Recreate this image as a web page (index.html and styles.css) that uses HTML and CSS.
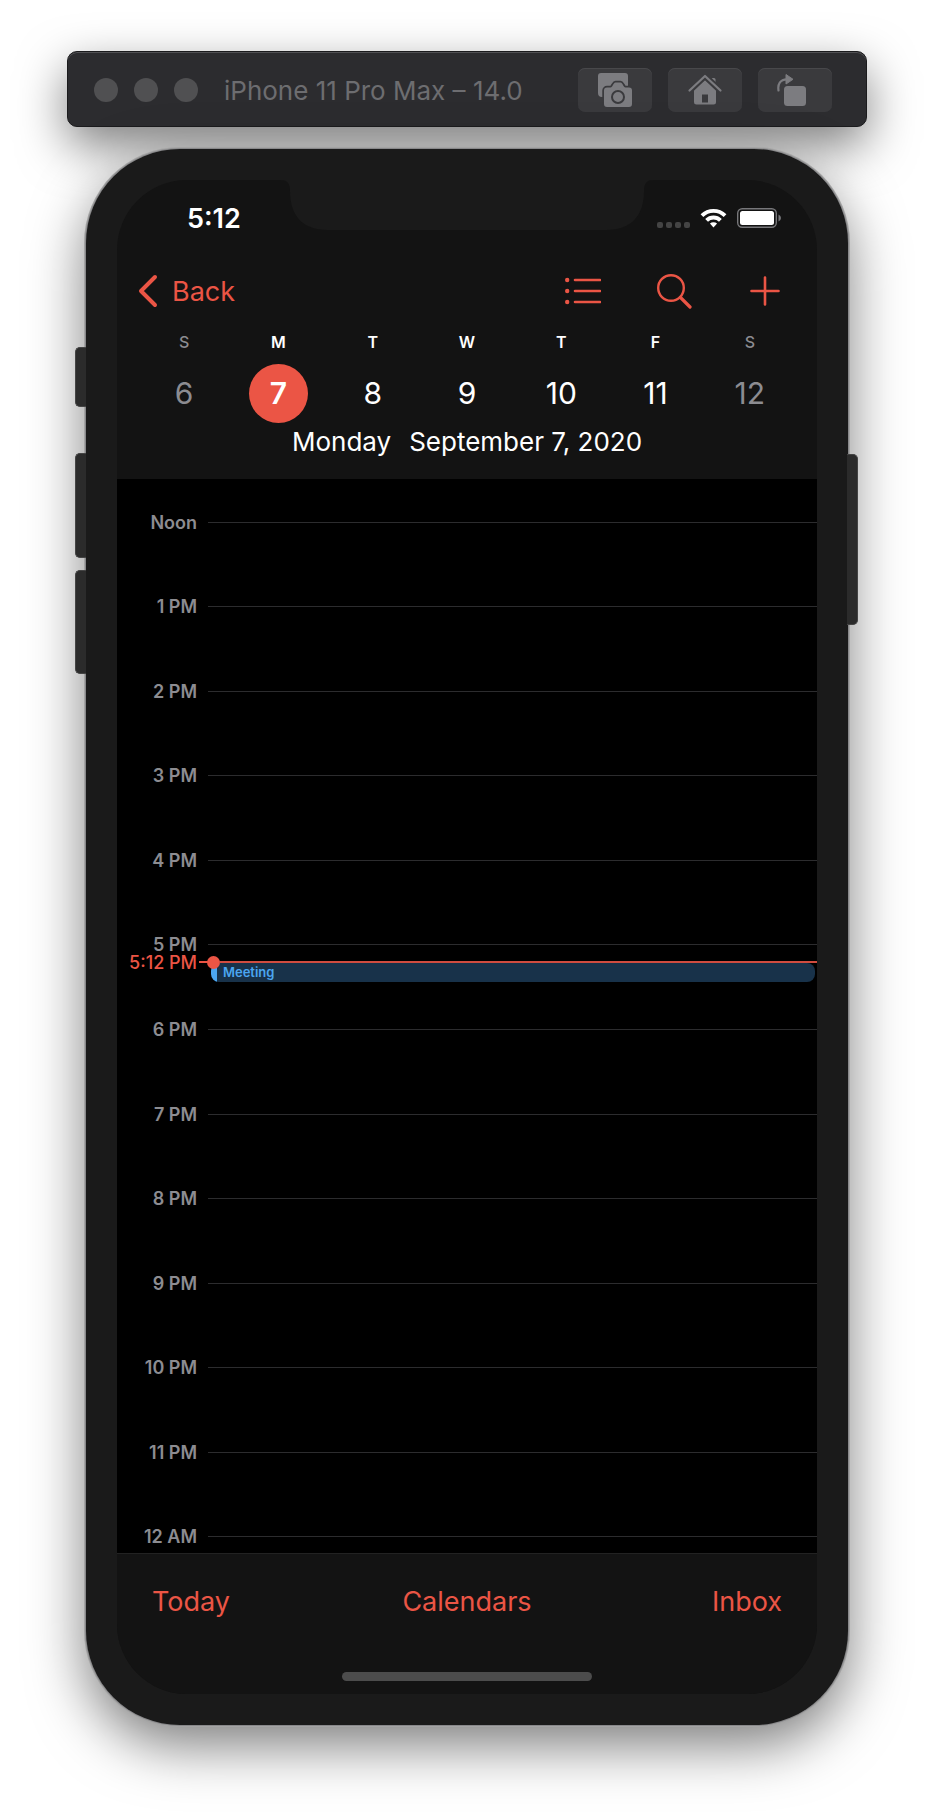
FILE: index.html
```html
<!DOCTYPE html>
<html lang="en">
<head>
<meta charset="utf-8">
<meta name="viewport" content="width=device-width, initial-scale=1">
<title>Calendar – Simulator</title>
<link rel="stylesheet" href="styles.css">
</head>
<body>
<header class="toolbar">
  <div class="lights"><span class="light"></span><span class="light"></span><span class="light"></span></div>
  <h1 class="toolbar-title">iPhone 11 Pro Max – 14.0</h1>
  <div class="tools">
    <button class="tool" aria-label="Screenshot">
      <svg width="36" height="36" viewBox="0 0 36 36"><path d="M4 1h24a3 3 0 0 1 3 3v14H12v7H5a4 4 0 0 1-4-4V4a3 3 0 0 1 3-3z" fill="#7c7c80"/><path d="M10 15.500h3.500c2 0 3-5 5-5h5c2 0 3 5 5 5H32a3 3 0 0 1 3 3V32a3 3 0 0 1-3 3H10a3 3 0 0 1-3-3V18.500a3 3 0 0 1 3-3z" fill="#7c7c80" stroke="#3a3a3d" stroke-width="3.500" paint-order="stroke"/><circle cx="21" cy="25" r="6" fill="none" stroke="#3a3a3d" stroke-width="2"/></svg>
    </button>
    <button class="tool" aria-label="Home">
      <svg width="36" height="36" viewBox="0 0 36 36"><path d="M24 12V7.500q0-1.500 1.500-1.500h1.500q1.500 0 1.500 1.500V16z" fill="#7c7c80"/><path d="M18 8 29 18.500V30a2.500 2.500 0 0 1-2.500 2.500h-17A2.500 2.500 0 0 1 7 30V18.500z" fill="#7c7c80"/><path d="M2.500 18.500 18 4l15.500 14.500" fill="none" stroke="#3a3a3d" stroke-width="6"/><path d="M2.500 18.500 18 4l15.500 14.500" fill="none" stroke="#7c7c80" stroke-width="2.200" stroke-linecap="round" stroke-linejoin="round"/><path d="M15 22.500h6v8h-6z" fill="#3a3a3d"/></svg>
    </button>
    <button class="tool" aria-label="Rotate">
      <svg width="36" height="36" viewBox="0 0 36 36"><rect x="7" y="14" width="22" height="20" rx="3.500" fill="#7c7c80"/><path d="M1.500 18.500C.5 12 3 7.500 10 7.300" fill="none" stroke="#7c7c80" stroke-width="2.200" stroke-linecap="round"/><path d="M9 2.500v9.500l7-4.700z" fill="#7c7c80" stroke="#7c7c80" stroke-linejoin="round"/></svg>
    </button>
  </div>
</header>

<main class="phone">
  <span class="key key-mute"></span>
  <span class="key key-up"></span>
  <span class="key key-down"></span>
  <span class="key key-power"></span>
  <div class="screen">
    <svg class="notch" width="374" height="50" viewBox="0 0 374 50"><path d="M0 0C7 0 10 3 10 11C10 35 22 50 48 50H326C352 50 364 35 364 11C364 3 367 0 374 0z" fill="#1a1a1a"/></svg>
    <div class="status">
      <time class="clock">5:12</time>
      <div class="status-icons">
        <span class="signal"><i></i><i></i><i></i><i></i></span>
        <svg width="27" height="20" viewBox="0 0 27 20" fill="#fff"><path d="M.6 6.300a18.200 18.200 0 0 1 25.800 0l-2.700 2.800a14.400 14.400 0 0 0-20.400 0z"/><path d="M5.200 11a11.800 11.800 0 0 1 16.600 0l-2.800 2.800a7.900 7.900 0 0 0-11 0z"/><path d="M9.900 15.600a5.300 5.300 0 0 1 7.200 0l-3.600 3.800z"/></svg>
        <svg width="44" height="20" viewBox="0 0 44 20"><rect x=".7" y=".7" width="38.600" height="18.600" rx="4.500" fill="none" stroke="#77777a" stroke-width="1.400"/><rect x="3" y="3" width="34" height="14" rx="2.500" fill="#fff"/><path d="M41.500 6.500q2.500 1.200 2.500 3.500t-2.500 3.500z" fill="#77777a"/></svg>
      </div>
    </div>

    <nav class="nav">
      <a class="back" href="#"><svg width="20" height="34" viewBox="0 0 20 34"><path d="M17 3 3 17l14 14" fill="none" stroke="currentColor" stroke-width="4" stroke-linecap="round" stroke-linejoin="round"/></svg>Back</a>
      <div class="actions">
        <button class="action" aria-label="List"><svg width="36" height="36" viewBox="0 0 36 36"><g fill="currentColor"><circle cx="2.200" cy="7" r="2.200"/><circle cx="2.200" cy="18" r="2.200"/><circle cx="2.200" cy="29" r="2.200"/></g><path d="M10 7h25M10 18h25M10 29h25" stroke="currentColor" stroke-width="2.600" stroke-linecap="round"/></svg></button>
        <button class="action" aria-label="Search"><svg width="36" height="36" viewBox="0 0 36 36"><circle cx="15" cy="15" r="12.800" fill="none" stroke="currentColor" stroke-width="2.400"/><path d="m24.500 24.500 9.500 9.500" stroke="currentColor" stroke-width="3.200" stroke-linecap="round"/></svg></button>
        <button class="action" aria-label="Add"><svg width="36" height="36" viewBox="0 0 36 36"><path d="M18 4.500v27M4.500 18h27" stroke="currentColor" stroke-width="2.600" stroke-linecap="round"/></svg></button>
      </div>
    </nav>

    <section class="week">
      <div class="day weekend"><span class="letter">S</span><button class="num">6</button></div>
      <div class="day today"><span class="letter">M</span><button class="num">7</button></div>
      <div class="day"><span class="letter">T</span><button class="num">8</button></div>
      <div class="day"><span class="letter">W</span><button class="num">9</button></div>
      <div class="day"><span class="letter">T</span><button class="num">10</button></div>
      <div class="day"><span class="letter">F</span><button class="num">11</button></div>
      <div class="day weekend"><span class="letter">S</span><button class="num">12</button></div>
    </section>
    <h2 class="date"><span>Monday</span><span>September 7, 2020</span></h2>

    <section class="timeline">
      <div class="hours">
        <div class="hour"><time>Noon</time></div>
        <div class="hour"><time>1 PM</time></div>
        <div class="hour"><time>2 PM</time></div>
        <div class="hour"><time>3 PM</time></div>
        <div class="hour"><time>4 PM</time></div>
        <div class="hour"><time>5 PM</time>
          <a class="event" href="#">Meeting</a>
          <div class="now"><time>5:12 PM</time><span class="dash"></span><span class="dot"></span></div>
        </div>
        <div class="hour"><time>6 PM</time></div>
        <div class="hour"><time>7 PM</time></div>
        <div class="hour"><time>8 PM</time></div>
        <div class="hour"><time>9 PM</time></div>
        <div class="hour"><time>10 PM</time></div>
        <div class="hour"><time>11 PM</time></div>
        <div class="hour"><time>12 AM</time></div>
      </div>
    </section>

    <footer class="tabs">
      <div class="tab-row"><a href="#">Today</a><a href="#">Calendars</a><a href="#">Inbox</a></div>
      <span class="home"></span>
    </footer>
  </div>
</main>
</body>
</html>
```
FILE: styles.css
```css
* { box-sizing: border-box; }
body {
  margin: 0;
  padding: 51px 67px 87px;
  background: #fff;
  font-family: Inter, "Liberation Sans", sans-serif;
  display: flex;
  flex-direction: column;
  align-items: center;
  gap: 22px;
}
button { border: 0; padding: 0; background: none; color: inherit; font: inherit; }
a { color: inherit; text-decoration: none; }
svg { display: block; flex: none; }

.toolbar {
  width: 100%;
  max-width: 800px;
  height: 76px;
  padding: 2px 34px 0 26px;
  display: flex;
  align-items: center;
  background: #2c2c2f;
  border: 1px solid #1b1b1d;
  border-radius: 10px;
  box-shadow: inset 0 1px 0 #515154, 0 18px 48px rgba(0, 0, 0, .5);
}
.lights { display: flex; gap: 16px; }
.light { width: 24px; height: 24px; border-radius: 50%; background: #505052; }
.toolbar-title { margin: 0 0 0 26px; font-size: 26px; font-weight: 400; color: #6d6d70; white-space: nowrap; }
.tools { margin-left: auto; display: flex; gap: 16px; }
.tool {
  width: 74px;
  height: 44px;
  border-radius: 7px;
  background: #3a3a3d;
  box-shadow: inset 0 1px 0 #48484b;
  display: flex;
  align-items: center;
  justify-content: center;
}

.phone {
  position: relative;
  width: calc(100% - 38px);
  max-width: 762px;
  padding: 31px;
  background: #1a1a1a;
  border-radius: 94px;
  box-shadow: 0 0 0 1px #88888a, 0 0 0 2px #a4a4a4, 0 20px 56px rgba(0, 0, 0, .52);
}
.key { position: absolute; left: -11px; width: 11px; background: #2b2b2b; border: 1px solid #444; border-right: 0; border-radius: 5px 0 0 5px; }
.key-mute { top: 198px; height: 60px; }
.key-up { top: 304px; height: 105px; }
.key-down { top: 421px; height: 104px; }
.key-power { top: 305px; height: 171px; left: auto; right: -10px; border: 1px solid #444; border-left: 0; border-radius: 0 5px 5px 0; }

.screen { position: relative; overflow: hidden; background: #131313; color: #fff; border-radius: 70px; }
.notch { position: absolute; top: 0; left: 50%; margin-left: -187px; }

.status { display: flex; justify-content: space-between; align-items: center; height: 76px; padding: 0 36px 0 70px; }
.clock { font-size: 27px; font-weight: 600; }
.status-icons { display: flex; align-items: center; gap: 10px; }
.signal { display: flex; gap: 3px; align-self: flex-end; }
.signal i { width: 6px; height: 6px; border-radius: 2px; background: #444; }

.nav { display: flex; justify-content: space-between; align-items: center; height: 70px; padding: 0 34px 0 21px; color: #eb5545; }
.back { display: flex; align-items: center; gap: 14px; font-size: 27px; }
.actions { display: flex; gap: 55px; }

.week { display: grid; grid-template-columns: repeat(7, 1fr); padding: 5px 20px 0; }
.day { display: flex; flex-direction: column; align-items: center; gap: 11px; }
.letter { font-size: 16px; line-height: 22px; font-weight: 600; }
.num { width: 59px; height: 59px; padding-bottom: 2px; border-radius: 50%; font-size: 30px; }
.weekend { color: #8c8c91; }
.weekend .letter { font-weight: 500; }
.today .num { background: #eb5545; font-weight: 600; }
.date { margin: 0; height: 56px; padding-top: 1px; display: flex; justify-content: center; gap: 18px; font-size: 26px; line-height: 36px; font-weight: 400; }

.timeline { background: #000; overflow: hidden; }
.hours { display: grid; grid-template-rows: repeat(13, 1fr); height: 1100px; padding-top: 1px; margin-bottom: -26px; }
.hour { position: relative; display: flex; align-items: center; gap: 11px; }
.hour time { width: 80px; text-align: right; white-space: nowrap; color: #8c8c91; font-size: 18px; font-weight: 600; }
.hour::after { content: ""; flex: 1; height: 1px; background: #2c2c2e; }
.now { position: absolute; top: 69%; left: 0; right: 0; height: 2px; display: flex; align-items: center; }
.hour .now time { color: #eb5545; font-weight: 500; }
.now::after { content: ""; flex: 1; height: 2px; background: #d14c3f; }
.dash { width: 9px; height: 2px; margin-left: 2px; background: #eb5545; }
.dot { width: 13px; height: 13px; margin: 0 -1px; border-radius: 50%; background: #eb5545; }
.event {
  position: absolute;
  top: calc(69% + 2px);
  left: 94px;
  right: 2px;
  height: 19px;
  padding-left: 12px;
  border-radius: 8px;
  background: linear-gradient(to right, #4ba6f1 6px, #18324a 6px);
  color: #4ba6f1;
  font-size: 13px;
  line-height: 19px;
  font-weight: 600;
}

.tabs { position: relative; background: #131313; border-top: 1px solid #222; display: flex; flex-direction: column; align-items: center; padding-bottom: 13px; }
.tab-row { width: 100%; height: 94px; padding: 0 35px; display: grid; grid-template-columns: 1fr auto 1fr; align-items: center; font-size: 27px; color: #eb5545; }
.tab-row a:last-child { text-align: right; }
.home { width: 250px; height: 9px; margin-top: 24px; border-radius: 5px; background: #4c4c4c; }
```
